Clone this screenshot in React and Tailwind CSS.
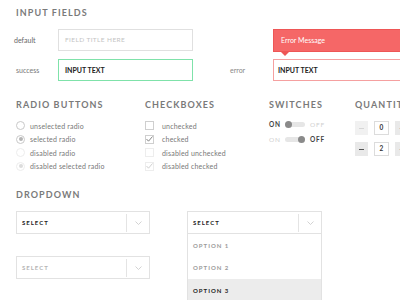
import React from 'react';

const Heading = ({ children }) => (
  <h2 className="h-[12px] leading-[12px] text-[9px] font-bold tracking-[1.1px] text-[#7a7a7a] whitespace-nowrap">{children}</h2>
);

const Chevron = ({ color = '#c8c8c8' }) => (
  <svg width="7" height="4" viewBox="0 0 7 4">
    <path d="M0.5 0.5 L3.5 3.5 L6.5 0.5" fill="none" stroke={color} strokeWidth="0.8" />
  </svg>
);

const Select = ({ disabled }) => (
  <div className="h-[23px] border border-[#e2e2e2] flex items-center bg-white">
    <span className={`flex-1 pl-[5px] text-[6px] font-bold tracking-[1px] ${disabled ? 'text-[#b5b5b5]' : 'text-[#222]'}`}>SELECT</span>
    <div className="w-px h-[18px] bg-[#e4e4e4]" />
    <div className="w-[22px] flex items-center justify-center">
      <Chevron />
    </div>
  </div>
);

const Radio = ({ checked, disabled, label }) => (
  <div className="h-[13.5px] flex items-center">
    <div className={`w-[9px] h-[9px] rounded-full border flex items-center justify-center ${disabled ? 'border-[#ededed]' : 'border-[#c9c9c9]'}`}>
      {checked && <div className={`w-[4px] h-[4px] rounded-full ${disabled ? 'bg-[#dcdcdc]' : 'bg-[#b5b5b5]'}`} />}
    </div>
    <span className="ml-[5px] text-[7px] tracking-[0.2px] text-[#777]">{label}</span>
  </div>
);

const Checkbox = ({ checked, disabled, label }) => (
  <div className="h-[13.5px] flex items-center">
    <div className={`w-[9px] h-[9px] border flex items-center justify-center ${disabled ? 'border-[#ededed]' : 'border-[#cfcfcf]'}`}>
      {checked && (
        <svg width="7" height="6" viewBox="0 0 7 6">
          <path d="M0.5 3 L2.5 5.2 L6.5 0.5" fill="none" stroke={disabled ? '#c4c4c4' : '#666'} strokeWidth="0.8" />
        </svg>
      )}
    </div>
    <span className="ml-[8px] text-[7px] tracking-[0.2px] text-[#777]">{label}</span>
  </div>
);

const Switch = ({ on }) => (
  <div className="h-[15px] flex items-center text-[6.5px] font-bold tracking-[0.8px]">
    <span className={`w-[16px] ${on ? 'text-[#444]' : 'text-[#cfcfcf] font-normal'}`}>ON</span>
    <div className={`w-[20px] h-[7px] flex items-center ${on ? 'justify-start' : 'justify-end'} relative`}>
      <div className="absolute left-0 right-0 h-[5px] rounded-full bg-[#e6e6e6]" />
      <div className="relative w-[7px] h-[7px] rounded-full bg-[#8a8a8a]" />
    </div>
    <span className={`ml-[5px] ${on ? 'text-[#cfcfcf] font-normal' : 'text-[#444]'}`}>OFF</span>
  </div>
);

const Quantity = ({ value, min }) => (
  <div className="h-[14px] flex items-center">
    <div className={`w-[13px] h-[14px] flex items-center justify-center ${min ? 'bg-[#f1f1f1]' : 'bg-[#e9e9e9]'}`}>
      <div className={`w-[5px] h-px ${min ? 'bg-[#d6d6d6]' : 'bg-[#555]'}`} />
    </div>
    <div className="ml-[6px] w-[15px] h-[14px] border border-[#dcdcdc] flex items-center justify-center text-[6.5px] font-bold text-[#333]">{value}</div>
    <div className="ml-[6px] w-[13px] h-[14px] bg-[#e9e9e9] flex items-center justify-center text-[8px] text-[#666]">+</div>
  </div>
);

export default function App() {
  return (
    <div className="w-[400px] h-[300px] overflow-hidden bg-white relative" style={{ fontFamily: 'Lato, "Open Sans", sans-serif' }}>
      {/* input fields */}
      <div className="pl-4 pt-[7px]">
        <Heading>INPUT FIELDS</Heading>
      </div>
      <div className="mt-[10px] flex items-start">
        <div className="shrink-0 w-[58px] pl-[14px] h-[22px] flex items-center text-[7px] text-[#666]">default</div>
        <div className="shrink-0 w-[135px] h-[22px] border border-[#e0e0e0] flex items-center pl-[6px] text-[6.5px] tracking-[0.4px] text-[#c4c4c4]">FIELD TITLE HERE</div>
        <div className="shrink-0 ml-[80px] w-[140px] h-[23px] bg-[#f56767] border border-[#ee5656] relative flex items-center pl-[7px] text-[7px] text-white">
          Error Message
          <div className="absolute left-[7px] bottom-[-5px] w-0 h-0 border-l-[4px] border-r-[4px] border-t-[4px] border-l-transparent border-r-transparent border-t-[#ee5656]" />
        </div>
      </div>
      <div className="mt-[7px] flex items-center">
        <div className="shrink-0 w-[58px] pl-[16px] h-[22px] flex items-center text-[7px] text-[#777]">success</div>
        <div className="shrink-0 w-[135px] h-[22px] border border-[#7fe2aa] flex items-center pl-[6px] text-[7px] font-bold text-[#222]">INPUT TEXT</div>
        <div className="shrink-0 w-[80px] pl-[37px] text-[7px] text-[#888]">error</div>
        <div className="shrink-0 w-[140px] h-[22px] border border-[#f5a0a0] flex items-center pl-[4px] text-[7px] font-bold text-[#222]">INPUT TEXT</div>
      </div>

      {/* radios, checkboxes, switches, quantity */}
      <div className="mt-[18px] flex pl-4">
        <div className="shrink-0 w-[129px]">
          <Heading>RADIO BUTTONS</Heading>
          <div className="mt-[8px]">
            <Radio label="unselected radio" />
            <Radio checked label="selected radio" />
            <Radio disabled label="disabled radio" />
            <Radio checked disabled label="disabled selected radio" />
          </div>
        </div>
        <div className="shrink-0 w-[124px]">
          <Heading>CHECKBOXES</Heading>
          <div className="mt-[8px]">
            <Checkbox label="unchecked" />
            <Checkbox checked label="checked" />
            <Checkbox disabled label="disabled unchecked" />
            <Checkbox checked disabled label="disabled checked" />
          </div>
        </div>
        <div className="shrink-0 w-[86px]">
          <Heading>SWITCHES</Heading>
          <div className="mt-[6px]">
            <Switch on />
            <Switch />
          </div>
        </div>
        <div className="shrink-0 w-[60px]">
          <Heading>QUANTITIES</Heading>
          <div className="mt-[10px] flex flex-col gap-[7px]">
            <Quantity value="0" min />
            <Quantity value="2" />
          </div>
        </div>
      </div>

      {/* dropdown */}
      <div className="mt-[16px] pl-4">
        <Heading>DROPDOWN</Heading>
      </div>
      <div className="mt-[10px] pl-4 flex items-start">
        <div className="shrink-0 w-[134px]">
          <Select />
          <div className="mt-[22px]">
            <Select disabled />
          </div>
        </div>
        <div className="shrink-0 ml-[37px] w-[135px]">
          <Select />
          <div className="border-x border-[#e2e2e2] text-[6px] font-bold tracking-[1px]">
            <div className="h-[22.5px] flex items-center pl-[5px] text-[#9a9a9a]">OPTION 1</div>
            <div className="h-[22.5px] flex items-center pl-[5px] text-[#9a9a9a]">OPTION 2</div>
            <div className="h-[22.5px] flex items-center pl-[5px] bg-[#ececec] text-[#222]">OPTION 3</div>
          </div>
        </div>
      </div>
    </div>
  );
}
